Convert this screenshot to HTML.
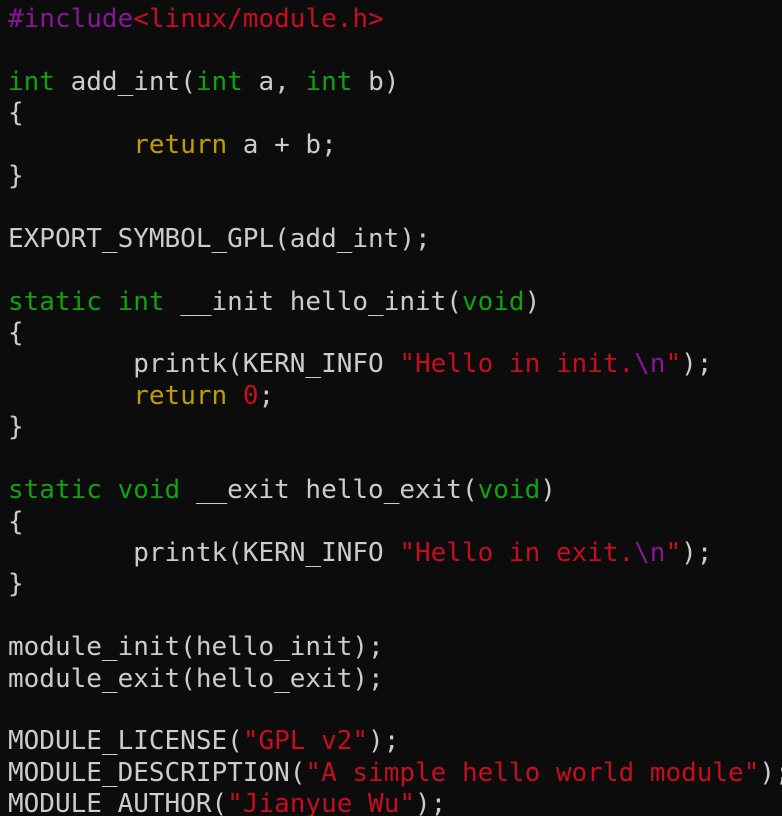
<!DOCTYPE html>
<html><head><meta charset="utf-8"><style>
html,body{margin:0;padding:0;background:#0c0c0c;width:782px;height:816px;overflow:hidden}
pre{margin:0;padding:4px 0 0 8px;font-family:"DejaVu Sans Mono","Liberation Mono",monospace;font-size:26px;line-height:31.4px;color:#cccccc;white-space:pre}
.p{color:#881798}.r{color:#c50f1f}.g{color:#13a10e}.y{color:#c19c00}
</style></head><body><pre><span class="p">#include</span><span class="r">&lt;linux/module.h&gt;</span>

<span class="g">int</span> add_int(<span class="g">int</span> a, <span class="g">int</span> b)
{
        <span class="y">return</span> a + b;
}

EXPORT_SYMBOL_GPL(add_int);

<span class="g">static</span> <span class="g">int</span> __init hello_init(<span class="g">void</span>)
{
        printk(KERN_INFO <span class="r">"Hello in init.</span><span class="p">\n</span><span class="r">"</span>);
        <span class="y">return</span> <span class="r">0</span>;
}

<span class="g">static</span> <span class="g">void</span> __exit hello_exit(<span class="g">void</span>)
{
        printk(KERN_INFO <span class="r">"Hello in exit.</span><span class="p">\n</span><span class="r">"</span>);
}

module_init(hello_init);
module_exit(hello_exit);

MODULE_LICENSE(<span class="r">"GPL v2"</span>);
MODULE_DESCRIPTION(<span class="r">"A simple hello world module"</span>);
MODULE_AUTHOR(<span class="r">"Jianyue Wu"</span>);</pre></body></html>
